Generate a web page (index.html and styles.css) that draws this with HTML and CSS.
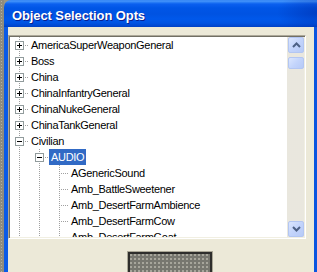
FILE: index.html
```html
<!DOCTYPE html>
<html>
<head>
<meta charset="utf-8">
<link rel="stylesheet" href="styles.css">
</head>
<body>
<div class="desk"></div>
<div class="window">
  <div class="titlebar"><span class="title">Object Selection Opts</span></div>
  <div class="frame">
    <div class="tree">
      <div class="rows">
        <div class="row"><span class="i t"><svg class="box" width="9" height="9" viewBox="0 0 9 9"><rect x="0.5" y="0.5" width="8" height="8"/><path d="M2 4.5h5M4.5 2v5"/></svg></span><span class="label">AmericaSuperWeaponGeneral</span></div>
        <div class="row"><span class="i t"><svg class="box" width="9" height="9" viewBox="0 0 9 9"><rect x="0.5" y="0.5" width="8" height="8"/><path d="M2 4.5h5M4.5 2v5"/></svg></span><span class="label">Boss</span></div>
        <div class="row"><span class="i t"><svg class="box" width="9" height="9" viewBox="0 0 9 9"><rect x="0.5" y="0.5" width="8" height="8"/><path d="M2 4.5h5M4.5 2v5"/></svg></span><span class="label">China</span></div>
        <div class="row"><span class="i t"><svg class="box" width="9" height="9" viewBox="0 0 9 9"><rect x="0.5" y="0.5" width="8" height="8"/><path d="M2 4.5h5M4.5 2v5"/></svg></span><span class="label">ChinaInfantryGeneral</span></div>
        <div class="row"><span class="i t"><svg class="box" width="9" height="9" viewBox="0 0 9 9"><rect x="0.5" y="0.5" width="8" height="8"/><path d="M2 4.5h5M4.5 2v5"/></svg></span><span class="label">ChinaNukeGeneral</span></div>
        <div class="row"><span class="i t"><svg class="box" width="9" height="9" viewBox="0 0 9 9"><rect x="0.5" y="0.5" width="8" height="8"/><path d="M2 4.5h5M4.5 2v5"/></svg></span><span class="label">ChinaTankGeneral</span></div>
        <div class="row"><span class="i t"><svg class="box" width="9" height="9" viewBox="0 0 9 9"><rect x="0.5" y="0.5" width="8" height="8"/><path d="M2 4.5h5"/></svg></span><span class="label">Civilian</span></div>
        <div class="row"><span class="i v"></span><span class="i t"><svg class="box" width="9" height="9" viewBox="0 0 9 9"><rect x="0.5" y="0.5" width="8" height="8"/><path d="M2 4.5h5"/></svg></span><span class="label sel">AUDIO</span></div>
        <div class="row"><span class="i v"></span><span class="i v"></span><span class="i t"></span><span class="label">AGenericSound</span></div>
        <div class="row"><span class="i v"></span><span class="i v"></span><span class="i t"></span><span class="label">Amb_BattleSweetener</span></div>
        <div class="row"><span class="i v"></span><span class="i v"></span><span class="i t"></span><span class="label">Amb_DesertFarmAmbience</span></div>
        <div class="row"><span class="i v"></span><span class="i v"></span><span class="i t"></span><span class="label">Amb_DesertFarmCow</span></div>
        <div class="row"><span class="i v"></span><span class="i v"></span><span class="i t"></span><span class="label">Amb_DesertFarmGoat</span></div>
      </div>
      <div class="vscroll">
        <div class="sbtn"><svg width="9" height="6" viewBox="0 0 9 6"><path d="M1 5L4.5 1.5L8 5"/></svg></div>
        <div class="thumb"></div>
        <div class="track"></div>
        <div class="sbtn"><svg width="9" height="6" viewBox="0 0 9 6"><path d="M1 1L4.5 4.5L8 1"/></svg></div>
      </div>
    </div>
    <div class="actions"><div class="swatch"></div></div>
  </div>
</div>
</body>
</html>
```

FILE: styles.css
```css
html, body {
  margin: 0;
  height: 272px;
  overflow: hidden;
}
body {
  display: flex;
  background: #9a9684;
}
.desk {
  width: 4px;
  flex: none;
  background:
    radial-gradient(circle, #b4b1a2 0.6px, transparent 1px) 0 0 / 3px 3px,
    #8f8c7e;
}
.window {
  flex: 1;
  min-width: 0;
  display: flex;
  flex-direction: column;
}
.titlebar {
  height: 27px;
  flex: none;
  box-sizing: border-box;
  border-radius: 7px 0 0 0;
  padding: 3px 0 0 8px;
  display: flex;
  align-items: center;
  background:
    radial-gradient(ellipse 40px 22px at 100% 45%, rgba(0, 25, 140, 0.35), transparent),
    linear-gradient(180deg, #2a7ff2 0, #4a97fb 1px, #2f84f7 2px, #0b60ef 4px, #0056e6 8px, #0053e2 14px, #0058ea 19px, #0053e2 23px, #0046cf 26px, #003fc0 27px);
}
.title {
  font: bold 13px "Liberation Sans", Arial, sans-serif;
  letter-spacing: -0.1px;
  color: #fff;
  text-shadow: 1px 1px 0 #0a1f8f;
  white-space: nowrap;
}
.frame {
  flex: 1;
  display: flex;
  flex-direction: column;
  background: #ece9d8;
  border-left: 4px solid #0a5ae6;
  border-right: 3px solid #0a55e0;
  padding: 8px 8px 0 0;
  min-height: 0;
}
.tree {
  height: 204px;
  flex: none;
  box-sizing: border-box;
  border: 1px solid;
  border-color: #aca899 #ffffff #ffffff #aca899;
  padding: 1px;
  box-shadow: inset 1px 1px 0 #716f64, inset -1px -1px 0 #f1efe2;
  background: #fff;
  display: flex;
}
.rows {
  flex: 1;
  min-width: 0;
  overflow: hidden;
  font: 11px "Liberation Sans", Arial, sans-serif;
  letter-spacing: -0.3px;
  color: #000;
}
.row {
  display: flex;
  height: 16px;
}
.i {
  width: 20px;
  flex: none;
  box-sizing: border-box;
  padding: 4px 0 0 5px;
}
.v {
  background: repeating-linear-gradient(#a0a0a0 0 1px, transparent 1px 2px) 9px 0 / 1px 16px no-repeat;
}
.t {
  background:
    repeating-linear-gradient(#a0a0a0 0 1px, transparent 1px 2px) 9px 0 / 1px 16px no-repeat,
    repeating-linear-gradient(90deg, #a0a0a0 0 1px, transparent 1px 2px) 9px 8px / 9px 1px no-repeat;
}
.box {
  display: block;
  shape-rendering: crispEdges;
}
.box rect {
  fill: #fff;
  stroke: #919b9c;
}
.box path {
  stroke: #000;
  fill: none;
}
.label {
  line-height: 16px;
  padding: 0 2px;
  margin-left: -1px;
  white-space: nowrap;
}
.sel {
  background: #316ac5;
  color: #fff;
}
.vscroll {
  width: 17px;
  flex: none;
  display: flex;
  flex-direction: column;
  background:
    radial-gradient(circle, #e6e3d8 0.6px, transparent 1px) 0 0 / 2px 2px,
    #f5f4ef;
}
.sbtn, .thumb {
  margin-left: 1px;
  box-sizing: border-box;
  border: 1px solid #b3c6f2;
  border-radius: 2px;
  background: linear-gradient(135deg, #dbe6fe 0%, #c3d4fb 50%, #b6caf7 100%);
}
.sbtn {
  height: 16px;
  flex: none;
  display: flex;
  align-items: center;
  justify-content: center;
}
.sbtn path {
  fill: none;
  stroke: #4d6185;
  stroke-width: 2;
}
.thumb {
  height: 12px;
  flex: none;
  margin-top: 4px;
}
.track {
  flex: 1;
}
.actions {
  padding: 12px 0 0 119px;
}
.swatch {
  width: 86px;
  height: 30px;
  box-sizing: border-box;
  border: 1px solid #aaa796;
  box-shadow: inset 0 0 0 2px #2e2e2c;
  background:
    radial-gradient(circle, #a8a79c 0.7px, transparent 1.1px) 1px 1px / 4px 4px,
    #77776f;
}
```
